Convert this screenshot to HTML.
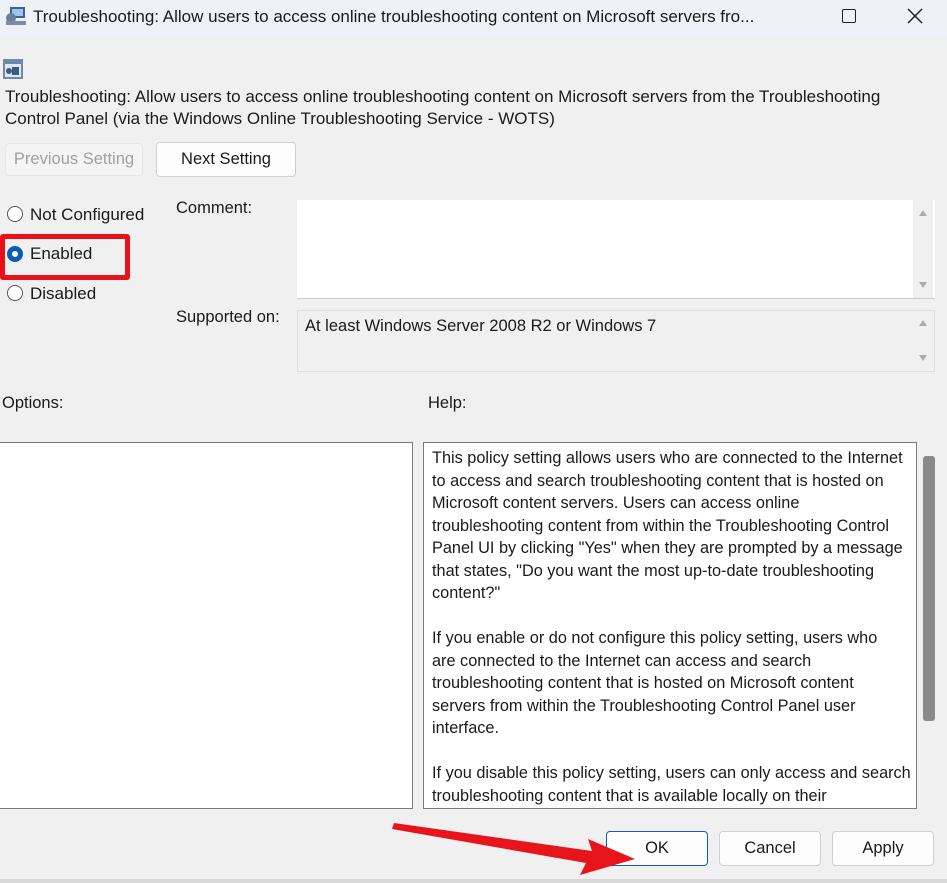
<!DOCTYPE html>
<html><head><meta charset="utf-8"><style>
*{margin:0;padding:0;box-sizing:border-box}
body{width:947px;height:883px;background:#f0f0f0;font-family:"Liberation Sans",sans-serif;color:#1a1a1a;position:relative;overflow:hidden;font-size:15.5px}
.a{position:absolute;white-space:nowrap}
.btn{position:absolute;border:1px solid #d0d0d0;border-radius:4px;background:#fdfdfd;text-align:center;font-size:16.5px}
.rad{position:absolute;width:16px;height:16px;border:1.5px solid #555;border-radius:50%;background:#fff}
.sb{position:absolute;background:#f0f0f0;width:20px}
.tri{position:absolute;left:6px;width:0;height:0;border-left:4px solid transparent;border-right:4px solid transparent}
</style></head><body>
<div class="a" style="left:0;top:0;width:947px;height:36px;background:#eef2f7"></div>
<svg class="a" style="left:5px;top:6px" width="22" height="20"><rect x="5" y="1" width="15" height="11" fill="#3b5fa0"/><rect x="7" y="3" width="11" height="7" fill="#9cc4ee"/><circle cx="6" cy="12" r="5" fill="#6a7f99"/><rect x="1" y="15" width="20" height="4" fill="#7a8ca8"/></svg>
<div class="a" style="left:33px;top:7px;font-size:17px">Troubleshooting: Allow users to access online troubleshooting content on Microsoft servers fro...</div>
<div class="a" style="left:842px;top:9px;width:14px;height:14px;border:1.5px solid #222;border-radius:2px"></div>
<svg class="a" style="left:907px;top:8px" width="16" height="16"><path d="M1 1L15 15M15 1L1 15" stroke="#222" stroke-width="1.5"/></svg>
<svg class="a" style="left:2px;top:58px" width="22" height="22"><rect x="1" y="1" width="20" height="20" fill="#6d8aa8"/><rect x="3" y="6" width="16" height="13" fill="#dfe8f0"/><rect x="10" y="9" width="7" height="8" fill="#3d5d80"/><circle cx="7" cy="13" r="3" fill="#3d5d80"/></svg>
<div class="a" style="left:5px;top:86px;line-height:22px;font-size:17px">Troubleshooting: Allow users to access online troubleshooting content on Microsoft servers from the Troubleshooting<br>Control Panel (via the Windows Online Troubleshooting Service - WOTS)</div>
<div class="btn" style="left:5px;top:143px;width:138px;height:33px;line-height:31px;color:#a0a0a0;background:#f4f4f4;border-color:#e6e6e6">Previous Setting</div>
<div class="btn" style="left:156px;top:142px;width:140px;height:35px;line-height:33px">Next Setting</div>
<div class="rad" style="left:7px;top:206px"></div>
<div class="a" style="left:30px;top:205px;font-size:17px">Not Configured</div>
<div class="rad" style="left:7px;top:246px;border:5px solid #0a5db5"></div>
<div class="a" style="left:30px;top:244px;font-size:17px">Enabled</div>
<div class="a" style="left:0;top:234px;width:130px;height:46px;border:5px solid #e8101a;border-radius:3px"></div>
<div class="rad" style="left:7px;top:285px"></div>
<div class="a" style="left:30px;top:284px;font-size:17px">Disabled</div>
<div class="a" style="left:176px;top:199px;font-size:16.5px">Comment:</div>
<div class="a" style="left:297px;top:200px;width:638px;height:99px;background:#fff;border-bottom:1px solid #ccc"></div>
<div class="sb" style="left:913px;top:200px;height:98px"><div class="tri" style="top:10px;border-bottom:6px solid #aaa"></div><div class="tri" style="top:82px;border-top:6px solid #aaa"></div></div>
<div class="a" style="left:176px;top:308px;font-size:16.5px">Supported on:</div>
<div class="a" style="left:297px;top:310px;width:638px;height:62px;background:#f0f0f0;border:1px solid #ddd"></div>
<div class="a" style="left:305px;top:317px;font-size:16.5px">At least Windows Server 2008 R2 or Windows 7</div>
<div class="sb" style="left:913px;top:311px;height:60px"><div class="tri" style="top:9px;border-bottom:6px solid #aaa"></div><div class="tri" style="top:44px;border-top:6px solid #aaa"></div></div>
<div class="a" style="left:2px;top:394px;font-size:16.5px">Options:</div>
<div class="a" style="left:428px;top:394px;font-size:16.5px">Help:</div>
<div class="a" style="left:-2px;top:442px;width:415px;height:367px;background:#fff;border:1px solid #7a7a7a"></div>
<div class="a" style="left:423px;top:442px;width:494px;height:367px;background:#fff;border:1px solid #7a7a7a;overflow:hidden">
<div style="padding:4px 0 0 8px;line-height:22.5px;font-size:16.3px">This policy setting allows users who are connected to the Internet<br>to access and search troubleshooting content that is hosted on<br>Microsoft content servers. Users can access online<br>troubleshooting content from within the Troubleshooting Control<br>Panel UI by clicking "Yes" when they are prompted by a message<br>that states, "Do you want the most up-to-date troubleshooting<br>content?"<br><br>If you enable or do not configure this policy setting, users who<br>are connected to the Internet can access and search<br>troubleshooting content that is hosted on Microsoft content<br>servers from within the Troubleshooting Control Panel user<br>interface.<br><br>If you disable this policy setting, users can only access and search<br>troubleshooting content that is available locally on their</div></div>
<div class="a" style="left:917px;top:442px;width:22px;height:367px;background:#f0f0f0"></div>
<div class="a" style="left:923px;top:456px;width:12px;height:265px;background:#8a8a8a;border-radius:3px"></div>
<div class="btn" style="left:606px;top:831px;width:102px;height:35px;line-height:33px;border:1.5px solid #0a5db5">OK</div>
<div class="btn" style="left:719px;top:831px;width:102px;height:35px;line-height:33px">Cancel</div>
<div class="btn" style="left:832px;top:831px;width:102px;height:35px;line-height:33px">Apply</div>
<svg class="a" style="left:390px;top:815px" width="260" height="60"><path d="M4 8 L202 36 L198 24 L245 44 L190 60 L196 48 L2 14 Z" fill="#e8141c"/></svg>
<div class="a" style="left:0;top:879px;width:947px;height:4px;background:#d8d8d8"></div>
</body></html>
